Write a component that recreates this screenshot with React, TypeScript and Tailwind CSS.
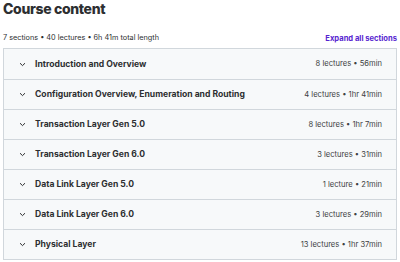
import React from "react";

const sections = [
  { title: "Introduction and Overview", meta: "8 lectures • 56min" },
  { title: "Configuration Overview, Enumeration and Routing", meta: "4 lectures • 1hr 41min" },
  { title: "Transaction Layer Gen 5.0", meta: "8 lectures • 1hr 7min" },
  { title: "Transaction Layer Gen 6.0", meta: "3 lectures • 31min" },
  { title: "Data Link Layer Gen 5.0", meta: "1 lecture • 21min" },
  { title: "Data Link Layer Gen 6.0", meta: "3 lectures • 29min" },
  { title: "Physical Layer", meta: "13 lectures • 1hr 37min" },
];

function Chevron() {
  return (
    <svg width="7" height="5" viewBox="0 0 7 5" className="shrink-0">
      <path d="M1 1.2 L3.5 3.6 L6 1.2" fill="none" stroke="#2d2f31" strokeWidth="1" />
    </svg>
  );
}

export default function App() {
  return (
    <div className="w-[400px] h-[262px] bg-white px-[3px] font-['Inter',sans-serif] text-[#2d2f31] overflow-hidden">
      <h2 className="text-[14px] font-extrabold leading-[18px] tracking-[-0.35px]">Course content</h2>
      <div className="flex items-end justify-between mt-[12px] h-[14px]">
        <span className="text-[7.3px] text-[#2d2f31]">7 sections • 40 lectures • 6h 41m total length</span>
        <button className="text-[7.6px] font-bold text-[#5624d0]">Expand all sections</button>
      </div>
      <div className="mt-[4px] border border-[#d1d7dc]">
        {sections.map((s, i) => (
          <div
            key={s.title}
            className={`flex items-center h-[30px] bg-[#f7f9fa] pl-[15px] pr-[14px] ${i > 0 ? "border-t border-[#d1d7dc]" : ""}`}
          >
            <Chevron />
            <span className="ml-[9px] text-[8.6px] font-bold flex-1">{s.title}</span>
            <span className="text-[7.6px] text-[#3e4143]">{s.meta}</span>
          </div>
        ))}
      </div>
    </div>
  );
}
